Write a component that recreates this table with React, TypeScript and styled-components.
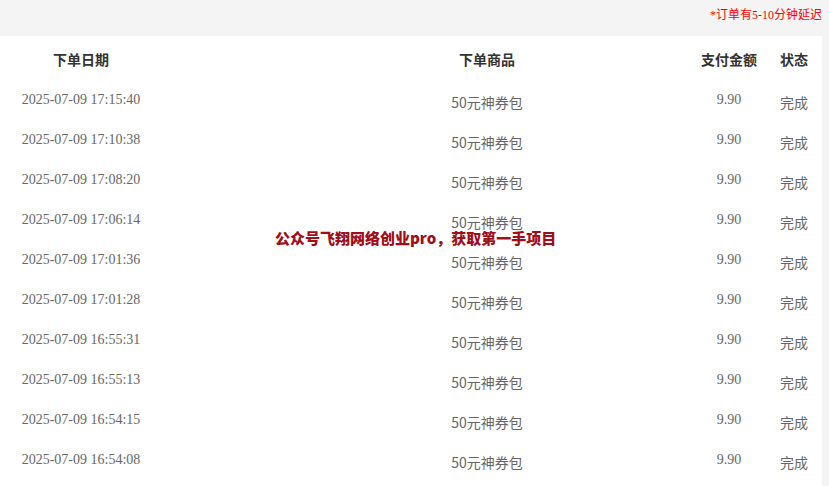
import React from "react";
import styled, { createGlobalStyle } from "styled-components";

interface Order {
  time: string;
  goods: string;
  amount: string;
  status: string;
}

const times = [
  "2025-07-09 17:15:40",
  "2025-07-09 17:10:38",
  "2025-07-09 17:08:20",
  "2025-07-09 17:06:14",
  "2025-07-09 17:01:36",
  "2025-07-09 17:01:28",
  "2025-07-09 16:55:31",
  "2025-07-09 16:55:13",
  "2025-07-09 16:54:15",
  "2025-07-09 16:54:08"
];

const orders: Order[] = times.map(time => ({
  time,
  goods: "50元神券包",
  amount: "9.90",
  status: "完成"
}));

export default function App() {
  return (
    <>
      <GlobalStyle />
      <Page>
        <Notice>*订单有5-10分钟延迟</Notice>
        <Table>
          <Row $header>
            <DateCell $header>下单日期</DateCell>
            <Spacer />
            <GoodsCell $header>下单商品</GoodsCell>
            <Spacer />
            <AmountCell $header>支付金额</AmountCell>
            <StatusCell $header>状态</StatusCell>
          </Row>
          {orders.map(order => (
            <Row key={order.time}>
              <DateCell>{order.time}</DateCell>
              <Spacer />
              <GoodsCell>{order.goods}</GoodsCell>
              <Spacer />
              <AmountCell>{order.amount}</AmountCell>
              <StatusCell>{order.status}</StatusCell>
            </Row>
          ))}
          <Watermark>公众号飞翔网络创业pro，获取第一手项目</Watermark>
        </Table>
      </Page>
    </>
  );
}

const GlobalStyle = createGlobalStyle`
  html, body {
    margin: 0;
    padding: 0;
    background: #f4f4f4;
    overflow: hidden;
  }
`;

const Page = styled.div`
  width: 829px;
  height: 486px;
  background: #f4f4f4;
`;

const Notice = styled.div`
  height: 36px;
  box-sizing: border-box;
  padding: 7px 7px 0 0;
  text-align: right;
  font-family: "Liberation Serif", "Noto Sans CJK SC", serif;
  font-size: 12px;
  line-height: 16px;
  color: #ff0000;
`;

const Table = styled.div`
  position: relative;
  width: 822px;
  height: 450px;
  padding-top: 3px;
  box-sizing: border-box;
  background: #ffffff;
`;

const Row = styled.div<{ $header?: boolean }>`
  display: grid;
  grid-template-columns: 162px 250px 150px 130px 74px 56px;
  box-sizing: border-box;
  height: ${p => (p.$header ? "41px" : "40px")};
  padding-bottom: ${p => (p.$header ? "2px" : "0")};
  align-items: center;
`;

const Cell = styled.div<{ $header?: boolean }>`
  font-size: 14px;
  line-height: 20px;
  white-space: nowrap;
  text-align: center;
  color: ${p => (p.$header ? "#333333" : "#666666")};
  font-weight: ${p => (p.$header ? 700 : 400)};
  font-family: ${p =>
    p.$header
      ? `"Noto Sans CJK SC", sans-serif`
      : `"Liberation Serif", "Noto Sans CJK SC", serif`};
`;

const DateCell = styled(Cell)``;

const GoodsCell = styled(Cell)`
  font-family: "Noto Sans CJK SC", sans-serif;
  padding-top: ${p => (p.$header ? "0" : "3px")};
`;

const AmountCell = styled(Cell)``;

const StatusCell = styled(Cell)`
  font-family: "Noto Sans CJK SC", sans-serif;
  padding-top: ${p => (p.$header ? "0" : "3px")};
`;

const Spacer = styled.div``;

const Watermark = styled.div`
  position: absolute;
  left: 275px;
  top: 192px;
  font-family: "Noto Sans CJK SC", sans-serif;
  font-weight: 900;
  font-size: 15px;
  line-height: 20px;
  color: #a20d18;
  white-space: nowrap;
`;
